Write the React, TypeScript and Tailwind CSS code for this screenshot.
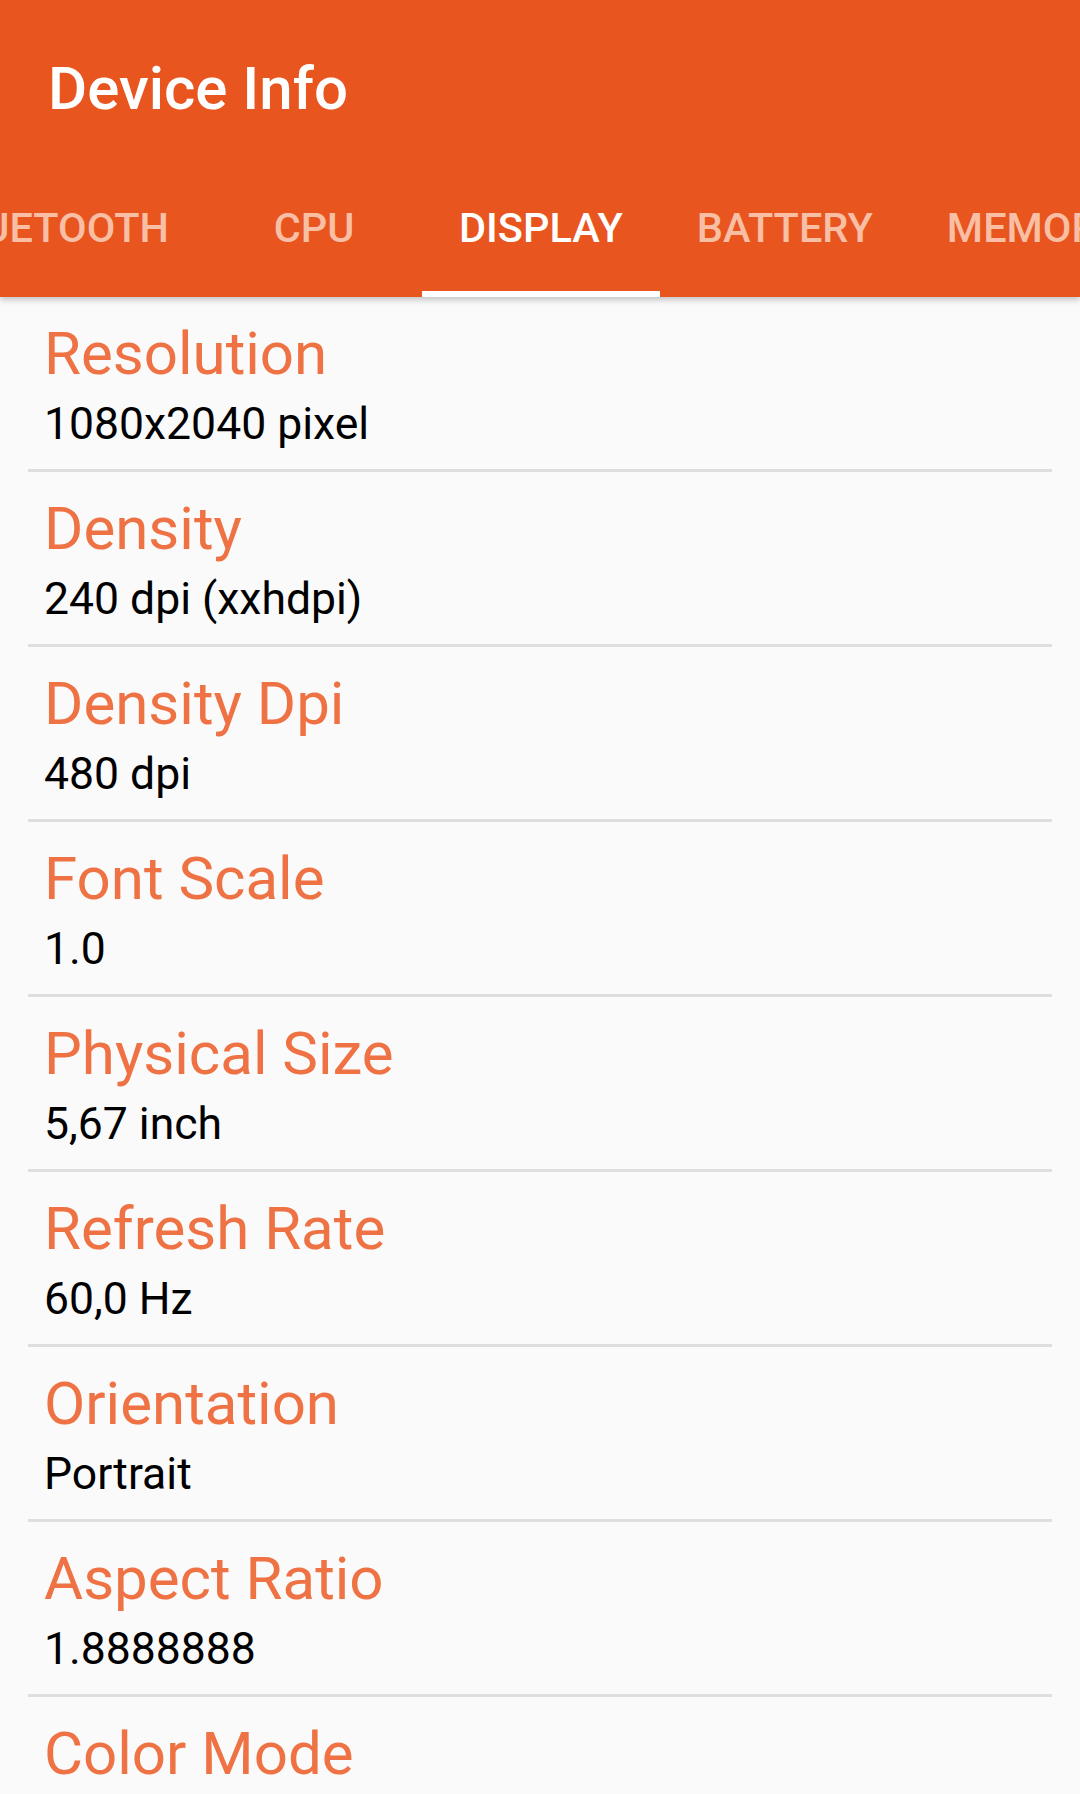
import React from "react";

const items = [
  { label: "Resolution", value: "1080x2040 pixel" },
  { label: "Density", value: "240 dpi (xxhdpi)" },
  { label: "Density Dpi", value: "480 dpi" },
  { label: "Font Scale", value: "1.0" },
  { label: "Physical Size", value: "5,67 inch" },
  { label: "Refresh Rate", value: "60,0 Hz" },
  { label: "Orientation", value: "Portrait" },
  { label: "Aspect Ratio", value: "1.8888888" },
  { label: "Color Mode", value: "" },
];

function Tab({ name, active }: { name: string; active?: boolean }) {
  return (
    <div
      className={`relative shrink-0 min-w-[216px] h-full px-[37px] pt-[7px] flex items-center justify-center text-[41.5px] font-medium ${
        active ? "text-white" : "text-[#f8bfa4]"
      }`}
    >
      {name}
      {active && <div className="absolute left-0 right-0 bottom-0 h-[6px] bg-white" />}
    </div>
  );
}

export default function App() {
  return (
    <div
      className="w-[1080px] h-[1794px] overflow-hidden bg-[#fafafa] flex flex-col"
      style={{ fontFamily: "Roboto, 'Noto Sans', sans-serif" }}
    >
      <header className="relative z-10 bg-[#e9551f] shadow-[0_3px_6px_rgba(0,0,0,0.22)]">
        <div className="h-[153px] flex items-center pl-[48px] pt-[24px]">
          <h1 className="text-[60px] font-medium text-white leading-none">Device Info</h1>
        </div>
        <div className="h-[144px] flex overflow-hidden whitespace-nowrap">
          <div className="w-[422px] shrink-0 flex justify-end overflow-hidden">
            <Tab name="BLUETOOTH" />
            <Tab name="CPU" />
          </div>
          <Tab name="DISPLAY" active />
          <Tab name="BATTERY" />
          <Tab name="MEMORY" />
        </div>
      </header>

      <main className="flex flex-col">
        {items.map((it) => (
          <div key={it.label} className="flex flex-col">
            <div className="px-[44px] pt-[22px] pb-[18px]">
              <div className="text-[60px] leading-[70px] text-[#ee7243]">{it.label}</div>
              <div className="mt-[9px] text-[44.5px] leading-[53px] text-black">{it.value}</div>
            </div>
            <div className="mx-[28px] h-[3px] bg-[#dedede]" />
          </div>
        ))}
      </main>
    </div>
  );
}
